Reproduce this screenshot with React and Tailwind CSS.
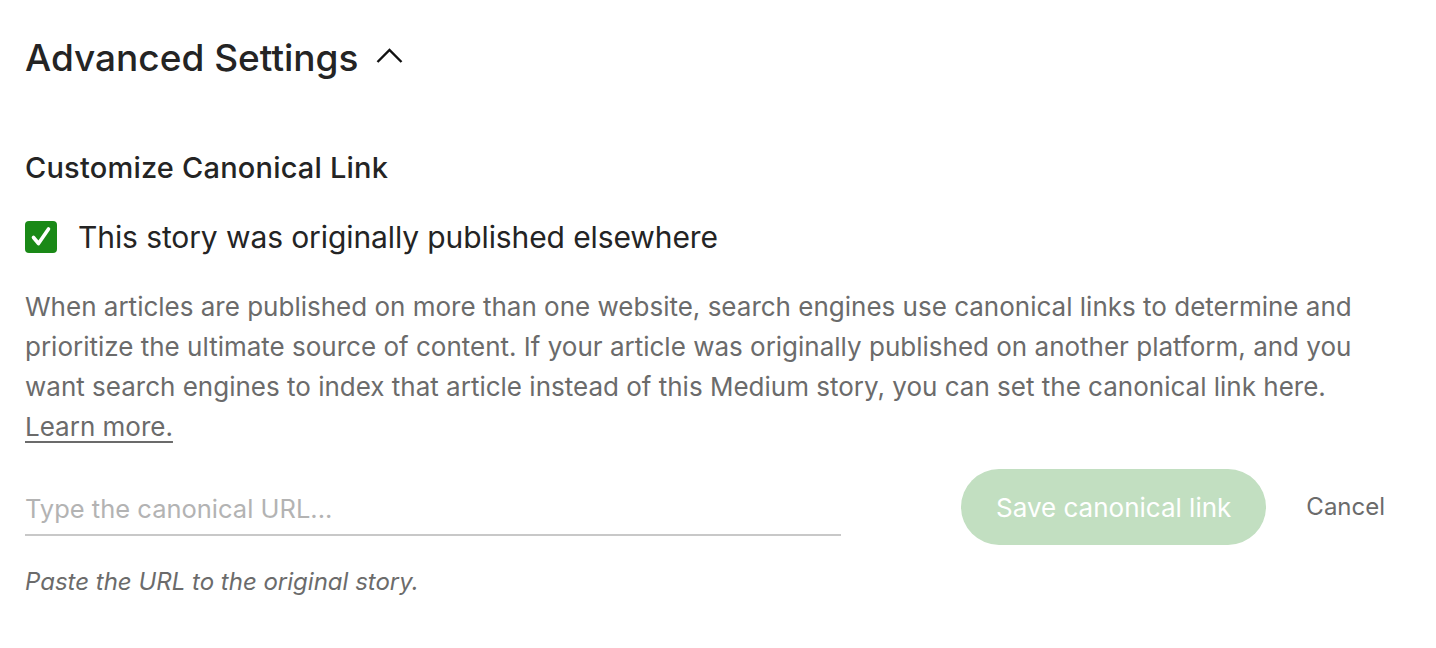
export default function App() {
  return (
    <div className="min-h-[648px] bg-white px-[25px] pt-[34px] text-[#242424]" style={{ fontFamily: 'Inter, "Liberation Sans", sans-serif' }}>
      <div className="flex items-center gap-[18px]">
        <h2 className="text-[37px] font-medium leading-[48px]">Advanced Settings</h2>
        <svg width="28" height="18" viewBox="0 0 28 18" className="mt-[-6px]">
          <path d="M1.5 16 L13.5 4 L25.5 16" fill="none" stroke="#111" strokeWidth="2.4" />
        </svg>
      </div>

      <h3 className="mt-[68px] text-[29px] font-medium leading-[36px] tracking-[0.2px]">Customize Canonical Link</h3>

      <label className="mt-[33px] flex items-center gap-[21px]">
        <span className="flex h-[32px] w-[32px] items-center justify-center rounded-[4px] bg-[#1a8917]">
          <svg width="24" height="24" viewBox="0 0 24 24">
            <path d="M4.5 12.5 L9.5 18.5 L19.5 4" fill="none" stroke="#fff" strokeWidth="3.6" strokeLinecap="round" strokeLinejoin="round" />
          </svg>
        </span>
        <span className="text-[30px] leading-[36px] tracking-[-0.1px]">This story was originally published elsewhere</span>
      </label>

      <p className="mt-[32px] max-w-[1380px] text-[26px] leading-[40px] text-[#6b6b6b]">
        When articles are published on more than one website, search engines use canonical links to determine and prioritize the ultimate source of content. If your article was originally published on another platform, and you want search engines to index that article instead of this Medium story, you can set the canonical link here.{' '}
        <br />
        <a className="underline underline-offset-[5px] decoration-[1.5px]">Learn more.</a>
      </p>

      <div className="mt-[36px] flex items-center">
        <div className="w-[816px] border-b-[2px] border-[#c8c8c8] pb-[8px]">
          <input
            className="w-full bg-transparent text-[25.5px] leading-[34px] text-[#242424] outline-none placeholder:text-[#b3b3b3]"
            placeholder="Type the canonical URL..."
          />
        </div>
        <button className="ml-[120px] mt-[-14px] h-[76px] rounded-full bg-[#c2dfc1] px-[35px] text-[26px] text-white">Save canonical link</button>
        <button className="ml-[40px] mt-[-14px] text-[24px] text-[#6b6b6b]">Cancel</button>
      </div>

      <p className="mt-[21px] text-[24px] italic leading-[32px] text-[#6b6b6b]">Paste the URL to the original story.</p>
    </div>
  )
}
